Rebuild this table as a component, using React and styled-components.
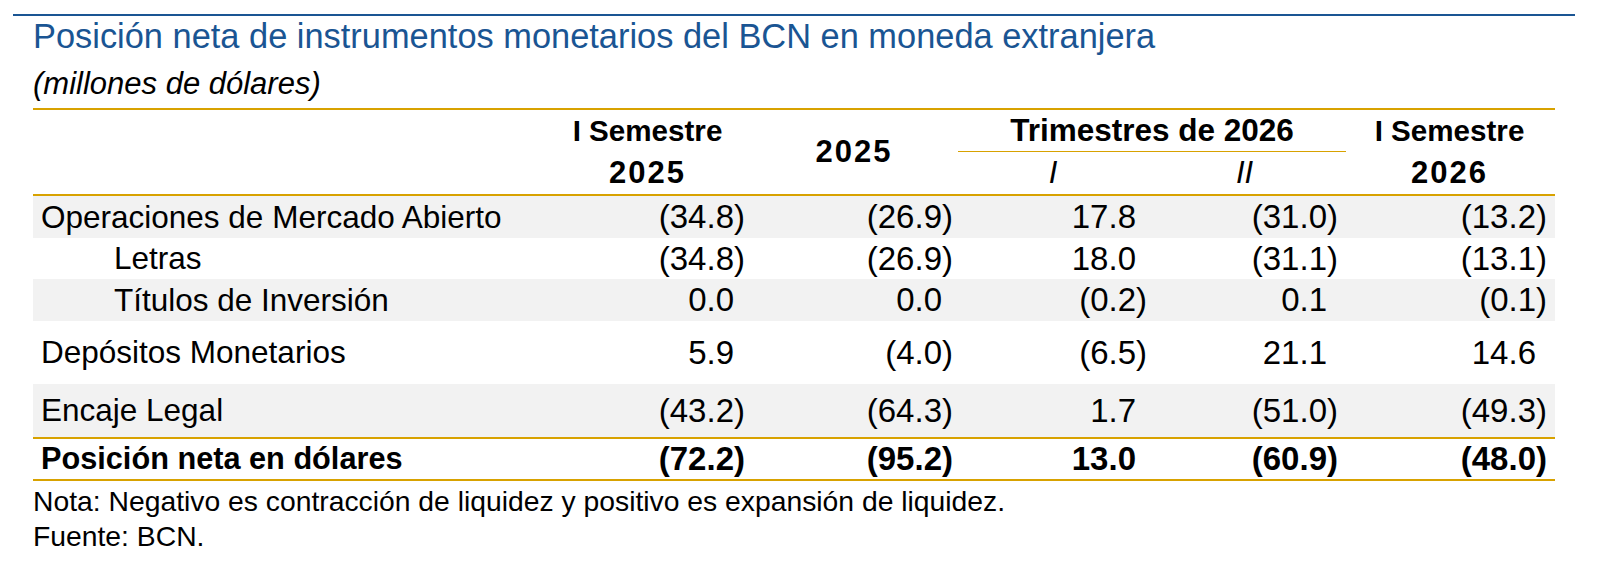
import React from "react";
import styled, { createGlobalStyle } from "styled-components";

const GOLD = "#d8a200";
const BLUE = "#1a5593";
const COLS = "515px 207px 208px 194px 191px 207px";

const Global = createGlobalStyle`
  html, body { margin: 0; padding: 0; background: #fff; }
  body { font-family: "Liberation Sans", Arial, sans-serif; color: #000; }
`;

const Page = styled.div`
  padding-top: 14px;
  width: 1598px;
`;

const TopRule = styled.div`
  height: 2px;
  margin: 0 23px 0 13px;
  background: ${BLUE};
`;

const Title = styled.h1`
  margin: 2px 0 0 33px;
  font-size: 34.4px;
  line-height: 36px;
  font-weight: 400;
  color: ${BLUE};
  white-space: nowrap;
`;

const Subtitle = styled.div`
  margin-left: 33px;
  padding-top: 6px;
  font-size: 31px;
  line-height: 48px;
  font-style: italic;
  white-space: nowrap;
`;

const Table = styled.div`
  margin-left: 33px;
  width: 1522px;
  border-top: 2px solid ${GOLD};
`;

const Header = styled.div`
  display: grid;
  grid-template-columns: ${COLS};
  grid-template-rows: 42px 42px;
  border-bottom: 2px solid ${GOLD};
  font-weight: 700;
  font-size: 29.6px;
`;

const HeadCell = styled.div`
  grid-column: ${(p) => p.$col};
  grid-row: ${(p) => p.$row};
  display: flex;
  align-items: center;
  justify-content: center;
  white-space: nowrap;
  padding-right: ${(p) => p.$shift || 0}px;
`;

const Year = styled(HeadCell)`
  font-size: 31px;
  letter-spacing: 2px;
`;

const GroupHead = styled(HeadCell)`
  margin: 0 2px 0 -5px;
  font-size: 31.5px;
  border-bottom: 1px solid ${GOLD};
`;

const SubHead = styled(HeadCell)`
  font-style: italic;
  font-weight: 400;
  font-size: 31px;
`;

const Row = styled.div`
  display: grid;
  grid-template-columns: ${COLS};
  height: ${(p) => p.$h}px;
  align-items: center;
  background: ${(p) => (p.$shade ? "#f2f2f2" : "#fff")};
  font-weight: ${(p) => (p.$bold ? 700 : 400)};
  border-top: ${(p) => (p.$total ? `2px solid ${GOLD}` : "none")};
  border-bottom: ${(p) => (p.$total ? `2px solid ${GOLD}` : "none")};
  box-sizing: border-box;
`;

const Label = styled.div`
  font-size: ${(p) => (p.$bold ? 30.7 : 31.5)}px;
  padding-left: ${(p) => (p.$indent ? 81 : 8)}px;
  white-space: nowrap;
`;

const Num = styled.div`
  font-size: 33px;
  text-align: right;
  padding-right: ${(p) => (p.$last ? 8 : 10) + (p.$neg ? 0 : 11)}px;
  white-space: nowrap;
`;

const Notes = styled.div`
  margin: 3px 0 0 33px;
  font-size: 28.3px;
  line-height: 35px;
  white-space: nowrap;
`;

const rows = [
  { label: "Operaciones de Mercado Abierto", vals: ["(34.8)", "(26.9)", "17.8", "(31.0)", "(13.2)"], shade: true, h: 42 },
  { label: "Letras", indent: true, vals: ["(34.8)", "(26.9)", "18.0", "(31.1)", "(13.1)"], h: 41 },
  { label: "Títulos de Inversión", indent: true, vals: ["0.0", "0.0", "(0.2)", "0.1", "(0.1)"], shade: true, h: 42 },
  { label: "Depósitos Monetarios", vals: ["5.9", "(4.0)", "(6.5)", "21.1", "14.6"], h: 63 },
  { label: "Encaje Legal", vals: ["(43.2)", "(64.3)", "1.7", "(51.0)", "(49.3)"], shade: true, h: 53 },
];

const total = { label: "Posición neta en dólares", vals: ["(72.2)", "(95.2)", "13.0", "(60.9)", "(48.0)"] };

function Values({ vals }) {
  return vals.map((v, i) => (
    <Num key={i} $neg={v.startsWith("(")} $last={i === vals.length - 1}>
      {v}
    </Num>
  ));
}

export default function App() {
  return (
    <Page>
      <Global />
      <TopRule />
      <Title>Posición neta de instrumentos monetarios del BCN en moneda extranjera</Title>
      <Subtitle>(millones de dólares)</Subtitle>
      <Table>
        <Header>
          <HeadCell $col="2" $row="1" $shift={8}>I Semestre</HeadCell>
          <Year $col="2" $row="2" $shift={8}>2025</Year>
          <Year $col="3" $row="1 / 3" $shift={10}>2025</Year>
          <GroupHead $col="4 / 6" $row="1">Trimestres de 2026</GroupHead>
          <SubHead $col="4" $row="2" $shift={14}>I</SubHead>
          <SubHead $col="5" $row="2" $shift={16}>II</SubHead>
          <HeadCell $col="6" $row="1" $shift={4}>I Semestre</HeadCell>
          <Year $col="6" $row="2" $shift={4}>2026</Year>
        </Header>
        {rows.map((r) => (
          <Row key={r.label} $shade={r.shade} $h={r.h}>
            <Label $indent={r.indent}>{r.label}</Label>
            <Values vals={r.vals} />
          </Row>
        ))}
        <Row $h={44} $bold $total>
          <Label $bold>{total.label}</Label>
          <Values vals={total.vals} />
        </Row>
      </Table>
      <Notes>
        <div>Nota: Negativo es contracción de liquidez y positivo es expansión de liquidez.</div>
        <div>Fuente: BCN.</div>
      </Notes>
    </Page>
  );
}
